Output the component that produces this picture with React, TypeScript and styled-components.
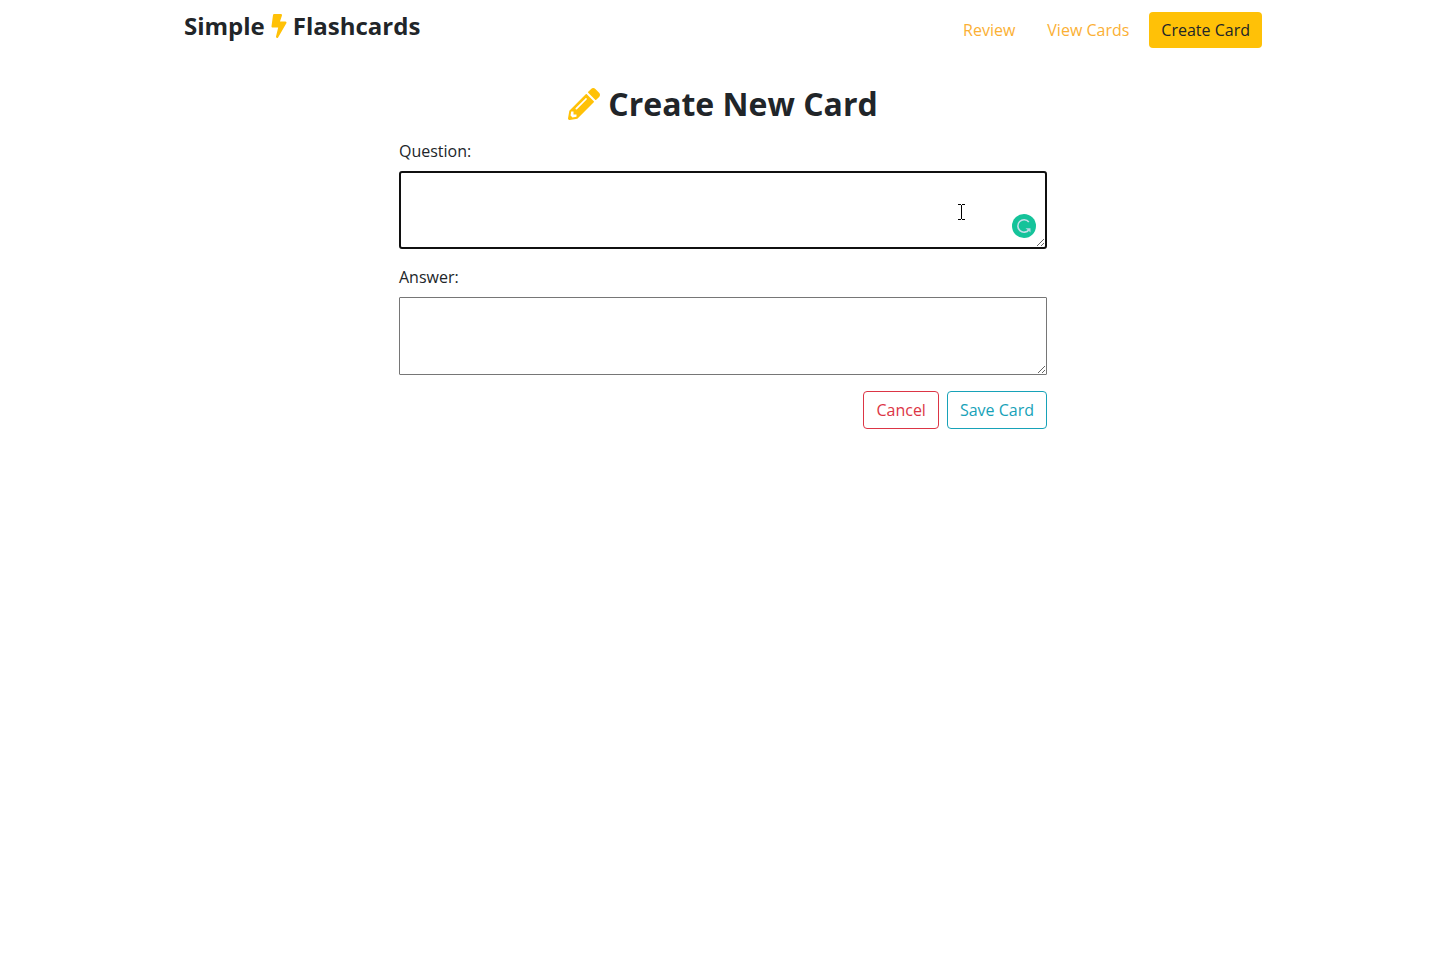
import React from "react";
import styled, { createGlobalStyle } from "styled-components";
import { FaBolt, FaPencilAlt } from "react-icons/fa";

const GlobalStyle = createGlobalStyle`
  *, *::before, *::after { box-sizing: border-box; }
  body {
    margin: 0;
    background: #fff;
    color: #212529;
    font-family: "Open Sans", sans-serif;
    font-size: 16px;
    font-weight: 400;
    line-height: 24px;
  }
`;

const Page = styled.div`
  padding: 0 7px 0 0;
`;

const Container = styled.div`
  width: 100%;
  max-width: 1080px;
  margin: 0 auto;
  padding: 12px 0;
`;

const Header = styled.header`
  display: flex;
  align-items: flex-start;
  justify-content: space-between;
  padding: 0 1px;
`;

const Brand = styled.h1`
  display: flex;
  align-items: center;
  gap: 6px;
  margin: 0;
  font-size: 24px;
  font-weight: 700;
  line-height: 28px;

  svg {
    width: 16px;
    height: 24px;
    color: #ffc107;
  }
`;

const Nav = styled.nav`
  display: flex;
  gap: 8px;
`;

const NavLink = styled.a<{ $active?: boolean }>`
  padding: 6px 12px;
  border-radius: 4px;
  background: ${(p) => (p.$active ? "#ffc107" : "transparent")};
  color: ${(p) => (p.$active ? "#212529" : "#fbb034")};
  text-decoration: none;
`;

const Main = styled.main`
  width: 60%;
  margin: 36px auto 0;
`;

const Title = styled.h2`
  display: flex;
  align-items: center;
  justify-content: center;
  gap: 8px;
  margin: 0 0 15px;
  font-size: 32px;
  font-weight: 700;
  line-height: 40px;

  svg {
    color: #ffc107;
  }
`;

const Form = styled.form`
  display: flex;
  flex-direction: column;
  gap: 16px;
`;

const Field = styled.div`
  display: flex;
  flex-direction: column;
  gap: 8px;
`;

const TextBox = styled.div`
  position: relative;
  display: flex;
`;

const TextArea = styled.textarea<{ $active?: boolean }>`
  width: 100%;
  height: 78px;
  padding: 2px;
  border: ${(p) => (p.$active ? "2px solid #101010" : "1px solid #767676")};
  border-radius: ${(p) => (p.$active ? "3px" : "1px")};
  outline: none;
  background: #fff;
  color: inherit;
  font: inherit;
  resize: vertical;
`;

const AssistantBadge = styled.svg`
  position: absolute;
  right: 11px;
  bottom: 11px;
`;

const Pointer = styled.svg`
  position: absolute;
  right: 82px;
  top: 33px;
`;

const Actions = styled.div`
  display: flex;
  justify-content: flex-end;
  gap: 8px;
`;

const Button = styled.button<{ $color: string }>`
  padding: 6px 12px;
  border: 1px solid ${(p) => p.$color};
  border-radius: 4px;
  background: transparent;
  color: ${(p) => p.$color};
  font: inherit;
  cursor: pointer;
`;

export default function App() {
  return (
    <Page>
      <GlobalStyle />
      <Container>
        <Header>
          <Brand>
            Simple
            <FaBolt />
            Flashcards
          </Brand>
          <Nav>
            <NavLink href="#review">Review</NavLink>
            <NavLink href="#cards">View Cards</NavLink>
            <NavLink href="#create" $active>
              Create Card
            </NavLink>
          </Nav>
        </Header>
        <Main>
          <Title>
            <FaPencilAlt size={32} />
            Create New Card
          </Title>
          <Form onSubmit={(e) => e.preventDefault()}>
            <Field>
              <label htmlFor="question">Question:</label>
              <TextBox>
                <TextArea id="question" $active />
                <Pointer width="7" height="16" viewBox="0 0 7 16" shapeRendering="crispEdges" aria-hidden="true">
                  <path d="M0 0h3v1H0zM4 0h3v1H4zM3 1h1v14H3zM0 15h3v1H0zM4 15h3v1H4z" fill="#000" />
                </Pointer>
                <AssistantBadge width="24" height="24" viewBox="0 0 24 24" aria-hidden="true">
                  <circle cx="12" cy="12" r="12" fill="#15c39a" />
                  <path d="M16.8 8A6.2 6.2 0 1 0 17 15.7" fill="none" stroke="#c5dfe9" strokeWidth="1.6" />
                  <path d="M13.5 14.2h5v4.2l-1.6-1.3z" fill="#b5d8e5" />
                </AssistantBadge>
              </TextBox>
            </Field>
            <Field>
              <label htmlFor="answer">Answer:</label>
              <TextBox>
                <TextArea id="answer" />
              </TextBox>
            </Field>
            <Actions>
              <Button type="button" $color="#dc3545">
                Cancel
              </Button>
              <Button type="submit" $color="#17a2b8">
                Save Card
              </Button>
            </Actions>
          </Form>
        </Main>
      </Container>
    </Page>
  );
}
